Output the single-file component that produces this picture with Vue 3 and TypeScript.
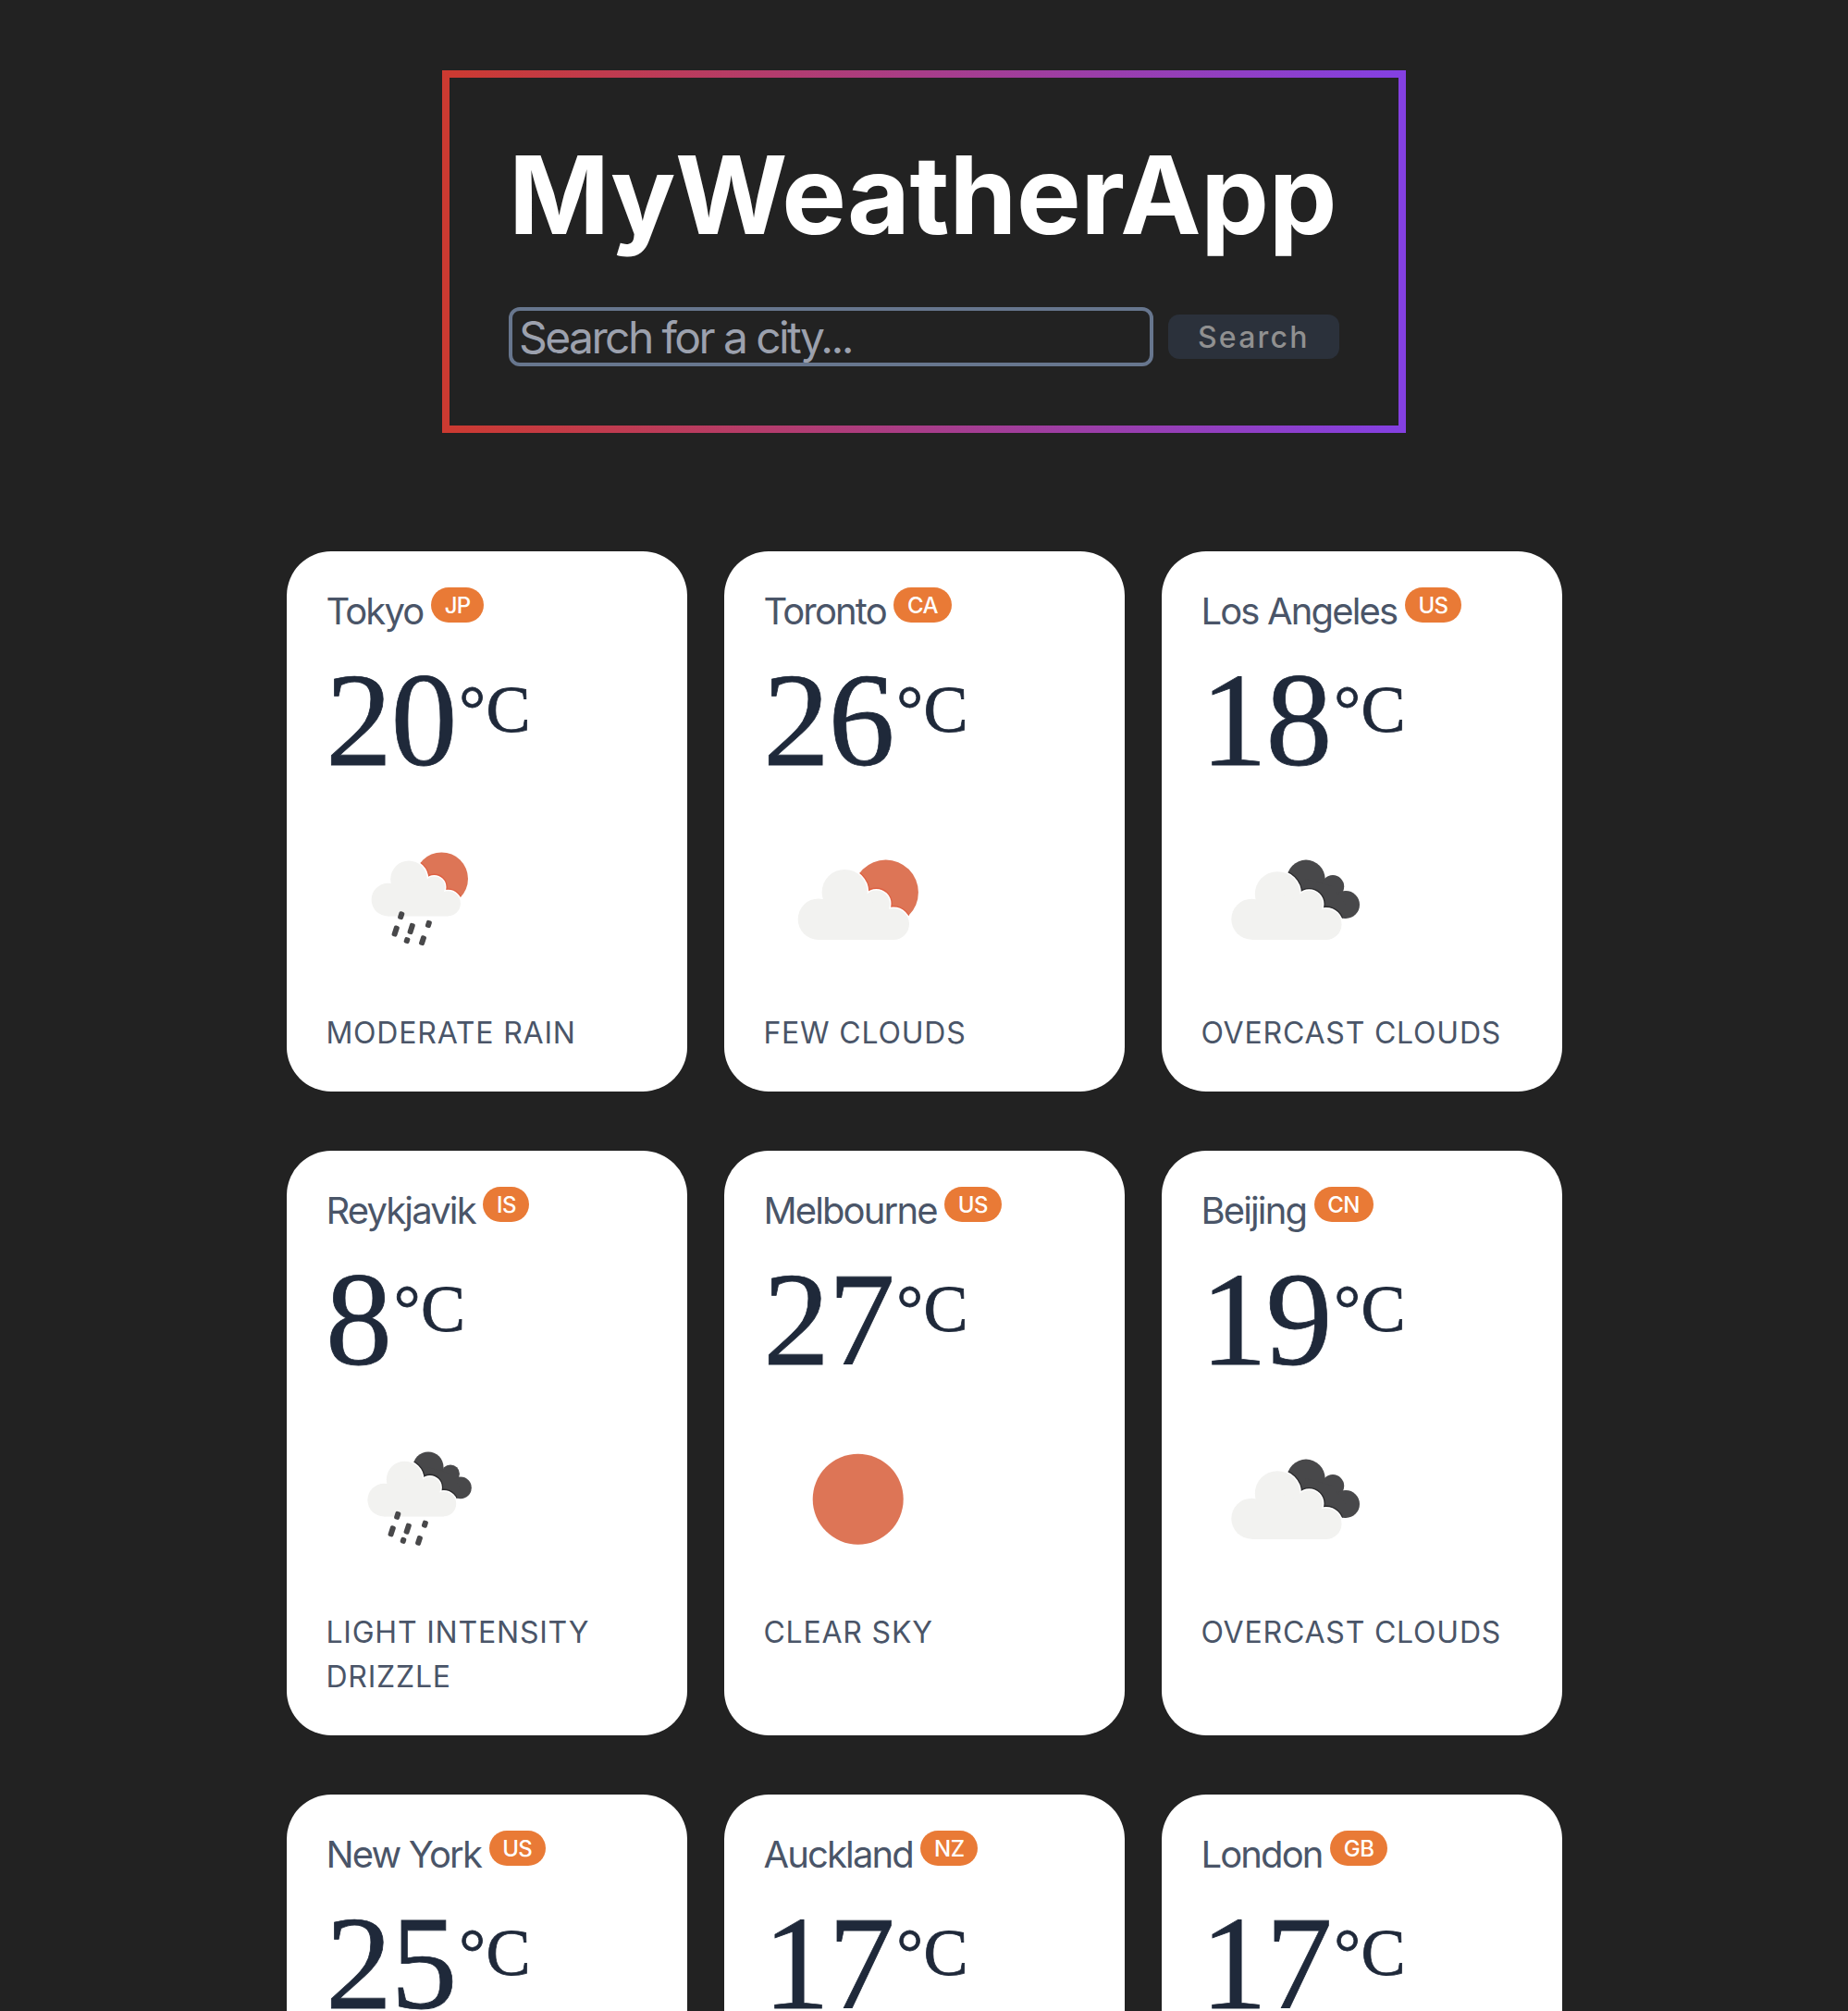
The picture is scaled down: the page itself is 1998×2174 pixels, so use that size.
<script setup lang="ts">
import { ref } from 'vue'

type Circle = [cx: number, cy: number, r: number]
// x, y of the centre and the length of a slanted rain streak
type Drop = [x: number, y: number, length: number]

interface Shape {
  circles: Circle[]
  body?: string
}

interface Icon {
  back: Shape
  backKind: 'sun' | 'dark'
  front?: Shape
  drops?: Drop[]
}

interface City {
  name: string
  country: string
  temp: number
  icon: keyof typeof icons
  description?: string
}

const drizzleDrops: Drop[] = [
  [79.7, 116.7, 8.6],
  [73.7, 133.6, 12],
  [90.7, 131, 12],
  [86, 143.6, 6.6],
  [109.4, 126, 7.8],
  [103, 143.7, 10.6],
]

const icons = {
  clear: {
    back: { circles: [[100.7, 99.7, 49]] },
    backKind: 'sun',
  },
  few: {
    back: { circles: [[130.7, 91.7, 35.2]] },
    backKind: 'sun',
    front: {
      circles: [[58, 120.7, 22.3], [86.2, 91.6, 24.6], [120.4, 104, 14.6], [139, 126, 17]],
      body: '58,120.7 86.2,91.6 120.4,104 139,126 139,143 58,143',
    },
  },
  overcast: {
    back: {
      circles: [[112, 77.3, 20.7], [141, 85.3, 12.2], [155, 105, 15]],
      body: '112,77.3 141,85.3 155,105 155,120 100,110',
    },
    backKind: 'dark',
    front: {
      circles: [[53.3, 120.7, 22], [81.2, 93.6, 24.4], [115.4, 104.3, 14.6], [133.7, 126.2, 16.8]],
      body: '53.3,120.7 81.2,93.6 115.4,104.3 133.7,126.2 133.7,143 53.3,143',
    },
  },
  rain: {
    back: { circles: [[123.4, 77, 28.6]] },
    backKind: 'sun',
    front: {
      circles: [[65.4, 99.6, 17.8], [88, 77.4, 19.8], [115.4, 86, 11.6], [130.4, 103.8, 13.5]],
      body: '65.4,99.6 88,77.4 115.4,86 130.4,103.8 130.4,117.4 65.4,117.4',
    },
    drops: drizzleDrops,
  },
  drizzle: {
    back: {
      circles: [[109, 65, 16.5], [133, 72.3, 9.9], [144, 87.4, 11.8]],
      body: '109,65 133,72.3 144,87.4 140,99 100,90',
    },
    backKind: 'dark',
    front: {
      circles: [[61.2, 100.6, 17.8], [83.4, 78.4, 19.6], [110.8, 87, 11.6], [125.8, 104.8, 13.4]],
      body: '61.2,100.6 83.4,78.4 110.8,87 125.8,104.8 125.8,118.4 61.2,118.4',
    },
    drops: drizzleDrops.map(([x, y, l]) => [x - 4, y + 0.7, l] as Drop),
  },
} satisfies Record<string, Icon>

const iconFor = (city: City): Icon => icons[city.icon]

const query = ref('')

const cities: City[] = [
  { name: 'Tokyo', country: 'JP', temp: 20, icon: 'rain', description: 'moderate rain' },
  { name: 'Toronto', country: 'CA', temp: 26, icon: 'few', description: 'few clouds' },
  { name: 'Los Angeles', country: 'US', temp: 18, icon: 'overcast', description: 'overcast clouds' },
  { name: 'Reykjavik', country: 'IS', temp: 8, icon: 'drizzle', description: 'light intensity drizzle' },
  { name: 'Melbourne', country: 'US', temp: 27, icon: 'clear', description: 'clear sky' },
  { name: 'Beijing', country: 'CN', temp: 19, icon: 'overcast', description: 'overcast clouds' },
  { name: 'New York', country: 'US', temp: 25, icon: 'clear' },
  { name: 'Auckland', country: 'NZ', temp: 17, icon: 'few' },
  { name: 'London', country: 'GB', temp: 17, icon: 'few' },
]
</script>

<template>
  <main class="page">
    <header class="hero">
      <h1 class="title">MyWeatherApp</h1>
      <form class="search" @submit.prevent>
        <input v-model="query" class="search-input" type="text" placeholder="Search for a city..." />
        <button class="search-button" type="submit" :disabled="!query">Search</button>
      </form>
    </header>

    <section class="cities">
      <article v-for="(city, i) in cities" :key="city.name" class="card">
        <h2 class="city">
          <span class="city-name">{{ city.name }}</span>
          <span class="country">{{ city.country }}</span>
        </h2>
        <div class="temp">{{ city.temp }}<sup class="unit">°C</sup></div>
        <svg class="icon" viewBox="0 0 200 200" aria-hidden="true">
          <clipPath :id="`back-${i}`">
            <circle v-for="([cx, cy, r], n) in iconFor(city).back.circles" :key="n" :cx="cx" :cy="cy" :r="r" />
            <polygon v-if="iconFor(city).back.body" :points="iconFor(city).back.body" />
          </clipPath>
          <g :class="iconFor(city).backKind">
            <circle v-for="([cx, cy, r], n) in iconFor(city).back.circles" :key="n" :cx="cx" :cy="cy" :r="r" />
            <polygon v-if="iconFor(city).back.body" :points="iconFor(city).back.body" />
          </g>
          <template v-if="iconFor(city).front">
            <g :class="['edge', `edge-${iconFor(city).backKind}`]" :clip-path="`url(#back-${i})`">
              <circle v-for="([cx, cy, r], n) in iconFor(city).front!.circles" :key="n" :cx="cx" :cy="cy" :r="r" />
            </g>
            <g class="halo">
              <circle v-for="([cx, cy, r], n) in iconFor(city).front!.circles" :key="n" :cx="cx" :cy="cy" :r="r" />
            </g>
            <g class="cloud">
              <circle v-for="([cx, cy, r], n) in iconFor(city).front!.circles" :key="n" :cx="cx" :cy="cy" :r="r" />
              <polygon :points="iconFor(city).front!.body" />
            </g>
          </template>
          <rect
            v-for="([x, y, l], n) in iconFor(city).drops ?? []"
            :key="`d${n}`"
            class="drop"
            :x="x - 3"
            :y="y - l / 2"
            width="6"
            :height="l"
            rx="2"
            :transform="`rotate(18 ${x} ${y})`"
          />
        </svg>
        <p v-if="city.description" class="description">{{ city.description }}</p>
      </article>
    </section>
  </main>
</template>

<style>
body {
  background: #222;
}
</style>

<style scoped>
.page {
  box-sizing: border-box;
  height: 100vh;
  overflow: hidden;
  padding-top: 76px;
  background: #222;
  font-family: Inter, 'Liberation Sans', sans-serif;
}

.hero {
  box-sizing: border-box;
  width: 1042px;
  height: 392px;
  margin: 0 auto 128px;
  padding: 64px;
  border: 8px solid;
  border-image: linear-gradient(90deg, #cc3a31, #8440e2) 1;
}

.title {
  margin: 0 0 58px;
  font-size: 117px;
  font-weight: 700;
  line-height: 126px;
  letter-spacing: -0.28px;
  white-space: nowrap;
  color: #fff;
}

.search {
  display: flex;
  align-items: center;
  gap: 16px;
}

.search-input {
  box-sizing: border-box;
  flex: 1;
  min-width: 0;
  height: 64px;
  padding: 0 7px;
  border: 4px solid #67768e;
  border-radius: 12px;
  background: transparent;
  font: 400 48px Inter, 'Liberation Sans', sans-serif;
  letter-spacing: -2.6px;
  color: #fff;
}

.search-input::placeholder {
  color: #9ca1ae;
  opacity: 1;
}

.search-button {
  width: 185px;
  height: 48px;
  padding: 1px 0 0 32px;
  border: 0;
  border-radius: 12px;
  background: #2b313b;
  font: 500 32px/47px Inter, 'Liberation Sans', sans-serif;
  letter-spacing: 2.2px;
  text-align: left;
  color: #909090;
}

.cities {
  display: grid;
  grid-template-columns: repeat(3, 433px);
  gap: 64px 40px;
  width: 1378px;
  margin: 0 auto;
}

.card {
  box-sizing: border-box;
  min-height: 584px;
  padding: 40px 43px 40px 42.4px;
  border-radius: 48px;
  background: #fff;
}

.city {
  display: flex;
  align-items: flex-start;
  gap: 8.5px;
  height: 48px;
  margin: 0;
  font-size: 40px;
  font-weight: 400;
  line-height: 50px;
  letter-spacing: -1.85px;
  color: #4a5568;
}

.country {
  height: 38px;
  margin-top: -1px;
  padding: 0 14.7px;
  border-radius: 19px;
  background: #e97a36;
  font-size: 24px;
  font-weight: 500;
  line-height: 39px;
  letter-spacing: -0.6px;
  color: #fff;
}

.temp {
  height: 144px;
  margin: 22px 0 23px -0.3px;
  font-family: 'Liberation Serif', serif;
  font-size: 144px;
  line-height: 146px;
  letter-spacing: -1.5px;
  color: #1f293a;
  -webkit-text-stroke: 0.8px #1f293a;
}

.unit {
  position: relative;
  top: -36px;
  margin-left: 3.2px;
  font-size: 72px;
  line-height: 0;
  letter-spacing: 0.5px;
  vertical-align: baseline;
}

.icon {
  display: block;
  width: 200px;
  height: 200px;
  margin-left: 1.5px;
}

.description {
  margin: 20px 0 -1px;
  font-size: 32px;
  font-weight: 400;
  line-height: 48px;
  letter-spacing: 0.8px;
  text-transform: uppercase;
  color: #4a5568;
}

.sun {
  fill: #dd7556;
}

.dark {
  fill: #48484a;
}

.edge {
  fill: none;
  stroke-width: 5.6px;
}

.edge-sun {
  stroke: #de6042;
}

.edge-dark {
  stroke: #2c2c2e;
}

.halo {
  fill: #fff;
  stroke: #fff;
  stroke-width: 3px;
}

.cloud {
  fill: #f2f2f0;
}

.drop {
  fill: #48484a;
}
</style>
